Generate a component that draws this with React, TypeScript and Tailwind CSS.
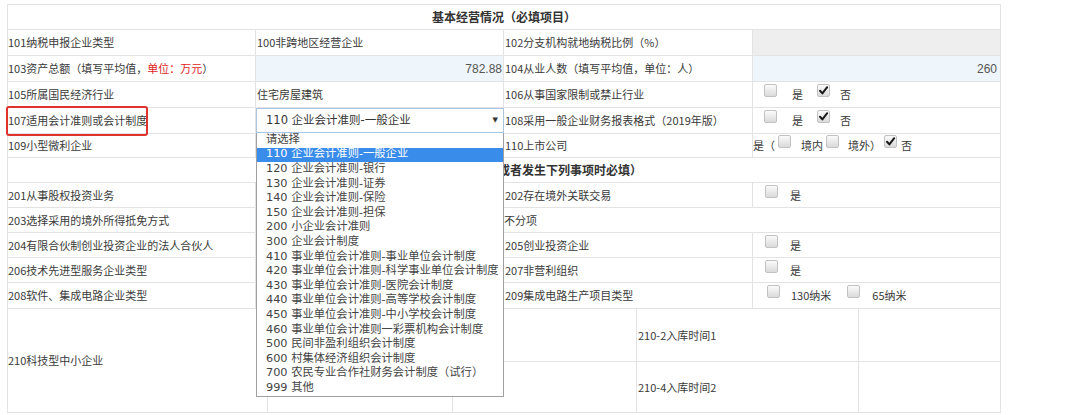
import React from 'react';

const options = [
  '请选择',
  '110 企业会计准则-一般企业',
  '120 企业会计准则-银行',
  '130 企业会计准则-证券',
  '140 企业会计准则-保险',
  '150 企业会计准则-担保',
  '200 小企业会计准则',
  '300 企业会计制度',
  '410 事业单位会计准则-事业单位会计制度',
  '420 事业单位会计准则-科学事业单位会计制度',
  '430 事业单位会计准则-医院会计制度',
  '440 事业单位会计准则-高等学校会计制度',
  '450 事业单位会计准则-中小学校会计制度',
  '460 事业单位会计准则一彩票机构会计制度',
  '500 民间非盈利组织会计制度',
  '600 村集体经济组织会计制度',
  '700 农民专业合作社财务会计制度（试行）',
  '999 其他',
];

function Cb({ checked }: { checked?: boolean }) {
  return (
    <span className="mb-[8px] flex h-[13px] w-[13px] shrink-0 items-center justify-center rounded-[2px] border border-[#c2c2c2] bg-linear-to-b from-[#fbfbfb] to-[#dadada]">
      {checked && (
        <svg width="11" height="11" viewBox="0 0 11 11">
          <path d="M2 5.8 L4.4 8.4 L9.2 2.2" fill="none" stroke="#1a1a1a" strokeWidth="2" strokeLinecap="round" strokeLinejoin="round" />
        </svg>
      )}
    </span>
  );
}

const c1 = 'flex h-full w-[248px] shrink-0 items-center border-r border-[#e3e3e3] pl-0';
const c2 = 'flex h-full w-[248px] shrink-0 items-center border-r border-[#e3e3e3] pl-[1px]';
const c3 = 'flex h-full w-[249px] shrink-0 items-center border-r border-[#e3e3e3] pl-[1px]';
const c4 = 'flex h-full w-[248px] shrink-0 items-center border-r border-[#e3e3e3]';

export default function App() {
  return (
    <div
      className="h-[415px] w-[1080px] overflow-hidden bg-white pt-[4px] pl-[7px] text-[11px] text-[#3a3a3a]"
      style={{ fontFamily: "'Noto Sans CJK SC', 'Noto Sans', sans-serif" }}
    >
      <div className="relative w-[994px] border-t border-l border-[#e3e3e3]">
        {/* title 1 */}
        <div className="flex h-[25px] items-center justify-center border-r border-b border-[#e3e3e3] text-[12px] font-bold text-[#333]">
          基本经营情况（必填项目）
        </div>

        <div className="flex h-[26px] border-b border-[#e3e3e3]">
          <div className={c1}>101纳税申报企业类型</div>
          <div className={c2}>100非跨地区经营企业</div>
          <div className={c3}>102分支机构就地纳税比例（%）</div>
          <div className={`${c4} bg-[#eeeeee]`}></div>
        </div>

        <div className="flex h-[26px] border-b border-[#e3e3e3]">
          <div className={c1}>
            103资产总额（填写平均值，<span className="text-[#e0231c]">单位：万元</span>）
          </div>
          <div className={`${c2} justify-end bg-[#eef5fb] pr-[1px] text-[12px] text-[#555]`} style={{ fontFamily: "'Liberation Sans', Arial, sans-serif" }}>
            782.88
          </div>
          <div className={c3}>104从业人数（填写平均值，单位：人）</div>
          <div className={`${c4} justify-end bg-[#eef5fb] pr-[3px] text-[12px] text-[#555]`} style={{ fontFamily: "'Liberation Sans', Arial, sans-serif" }}>
            260
          </div>
        </div>

        <div className="flex h-[26px] border-b border-[#e3e3e3]">
          <div className={c1}>105所属国民经济行业</div>
          <div className={c2}>住宅房屋建筑</div>
          <div className={c3}>106从事国家限制或禁止行业</div>
          <div className={`${c4} pl-[11px]`}>
            <Cb />
            <span className="ml-[15px]">是</span>
            <span className="ml-[14px]"><Cb checked /></span>
            <span className="ml-[10px]">否</span>
          </div>
        </div>

        <div className="flex h-[26px] border-b border-[#e3e3e3]">
          <div className={c1}>107适用会计准则或会计制度</div>
          <div className="h-full w-[248px] shrink-0 border-r border-[#e3e3e3]">
            <div className="relative z-10 h-full w-[248px]">
              <div
                className="flex h-full w-full items-center justify-between border border-[#a9c5e2] bg-white pr-[5px] pl-[9px] text-[11.5px] text-[#333]"
                style={{ fontFamily: "'DejaVu Sans', 'Noto Sans CJK SC', sans-serif" }}
              >
                <span>110 企业会计准则-一般企业</span>
                <span className="text-[7px] text-[#333]">▼</span>
              </div>
              <div
                className="absolute top-full left-0 w-[248px] border border-t-0 border-[#a0a0a0] bg-white text-[11.3px] text-[#444]"
                style={{ fontFamily: "'DejaVu Sans', 'Noto Sans CJK SC', sans-serif" }}
              >
                {options.map((o, i) => (
                  <div
                    key={o}
                    className={`flex h-[14.6px] items-center pl-[9px] whitespace-nowrap ${i === 1 ? 'bg-[#3a8cea] text-white' : ''}`}
                  >
                    {o}
                  </div>
                ))}
              </div>
            </div>
          </div>
          <div className={c3}>108采用一般企业财务报表格式（2019年版）</div>
          <div className={`${c4} pl-[11px]`}>
            <Cb />
            <span className="ml-[15px]">是</span>
            <span className="ml-[14px]"><Cb checked /></span>
            <span className="ml-[10px]">否</span>
          </div>
        </div>

        <div className="flex h-[24px] border-b border-[#e3e3e3]">
          <div className={c1}>109小型微利企业</div>
          <div className={c2}></div>
          <div className={c3}>110上市公司</div>
          <div className={c4}>
            <span>是（</span>
            <span className="ml-[3px]"><Cb /></span>
            <span className="ml-[10px]">境内</span>
            <span className="ml-[3px]"><Cb /></span>
            <span className="ml-[9px]">境外）</span>
            <span className="ml-[3px]"><Cb checked /></span>
            <span className="ml-[4px]">否</span>
          </div>
        </div>

        {/* title 2 */}
        <div className="flex h-[25px] items-center justify-center border-r border-b border-[#e3e3e3] text-[12px] font-bold text-[#333]">
          有关涉税事项情况（存在或者发生下列事项时必填）
        </div>

        <div className="flex h-[25px] border-b border-[#e3e3e3]">
          <div className={c1}>201从事股权投资业务</div>
          <div className={c2}></div>
          <div className={c3}>202存在境外关联交易</div>
          <div className={`${c4} pl-[12px]`}>
            <Cb />
            <span className="ml-[12px]">是</span>
          </div>
        </div>

        <div className="flex h-[25px] border-b border-[#e3e3e3]">
          <div className={c1}>203选择采用的境外所得抵免方式</div>
          <div className={c2}></div>
          <div className="flex h-full w-[497px] shrink-0 items-center border-r border-[#e3e3e3] pl-0">不分项</div>
        </div>

        <div className="flex h-[25px] border-b border-[#e3e3e3]">
          <div className={c1}>204有限合伙制创业投资企业的法人合伙人</div>
          <div className={c2}></div>
          <div className={c3}>205创业投资企业</div>
          <div className={`${c4} pl-[12px]`}>
            <Cb />
            <span className="ml-[12px]">是</span>
          </div>
        </div>

        <div className="flex h-[25px] border-b border-[#e3e3e3]">
          <div className={c1}>206技术先进型服务企业类型</div>
          <div className={c2}></div>
          <div className={c3}>207非营利组织</div>
          <div className={`${c4} pl-[12px]`}>
            <Cb />
            <span className="ml-[12px]">是</span>
          </div>
        </div>

        <div className="flex h-[26px] border-b border-[#e3e3e3]">
          <div className={c1}>208软件、集成电路企业类型</div>
          <div className={c2}></div>
          <div className={c3}>209集成电路生产项目类型</div>
          <div className={`${c4} pl-[14px]`}>
            <Cb />
            <span className="ml-[11px]">130纳米</span>
            <span className="ml-[16px]"><Cb /></span>
            <span className="ml-[12px]">65纳米</span>
          </div>
        </div>

        {/* 210 */}
        <div className="flex h-[104px] border-b border-[#e3e3e3]">
          <div className="flex h-full w-[260px] shrink-0 items-center border-r border-[#e3e3e3]">210科技型中小企业</div>
          <div className="flex flex-col">
            <div className="flex h-[53px] border-b border-[#e3e3e3]">
              <div className="h-full w-[185px] shrink-0 border-r border-[#e3e3e3]"></div>
              <div className="h-full w-[184px] shrink-0 border-r border-[#e3e3e3]"></div>
              <div className="flex h-full w-[222px] shrink-0 items-center border-r border-[#e3e3e3] pl-[1px]">210-2入库时间1</div>
              <div className="h-full w-[142px] shrink-0 border-r border-[#e3e3e3]"></div>
            </div>
            <div className="flex h-[50px]">
              <div className="h-full w-[185px] shrink-0 border-r border-[#e3e3e3]"></div>
              <div className="h-full w-[184px] shrink-0 border-r border-[#e3e3e3]"></div>
              <div className="flex h-full w-[222px] shrink-0 items-center border-r border-[#e3e3e3] pl-[1px]">210-4入库时间2</div>
              <div className="h-full w-[142px] shrink-0 border-r border-[#e3e3e3]"></div>
            </div>
          </div>
        </div>

        {/* red highlight box */}
        <div className="pointer-events-none absolute top-[101px] left-[-2px] z-20 h-[30px] w-[142px] rounded-[3px] border-2 border-[#e0322c]"></div>
      </div>
    </div>
  );
}
